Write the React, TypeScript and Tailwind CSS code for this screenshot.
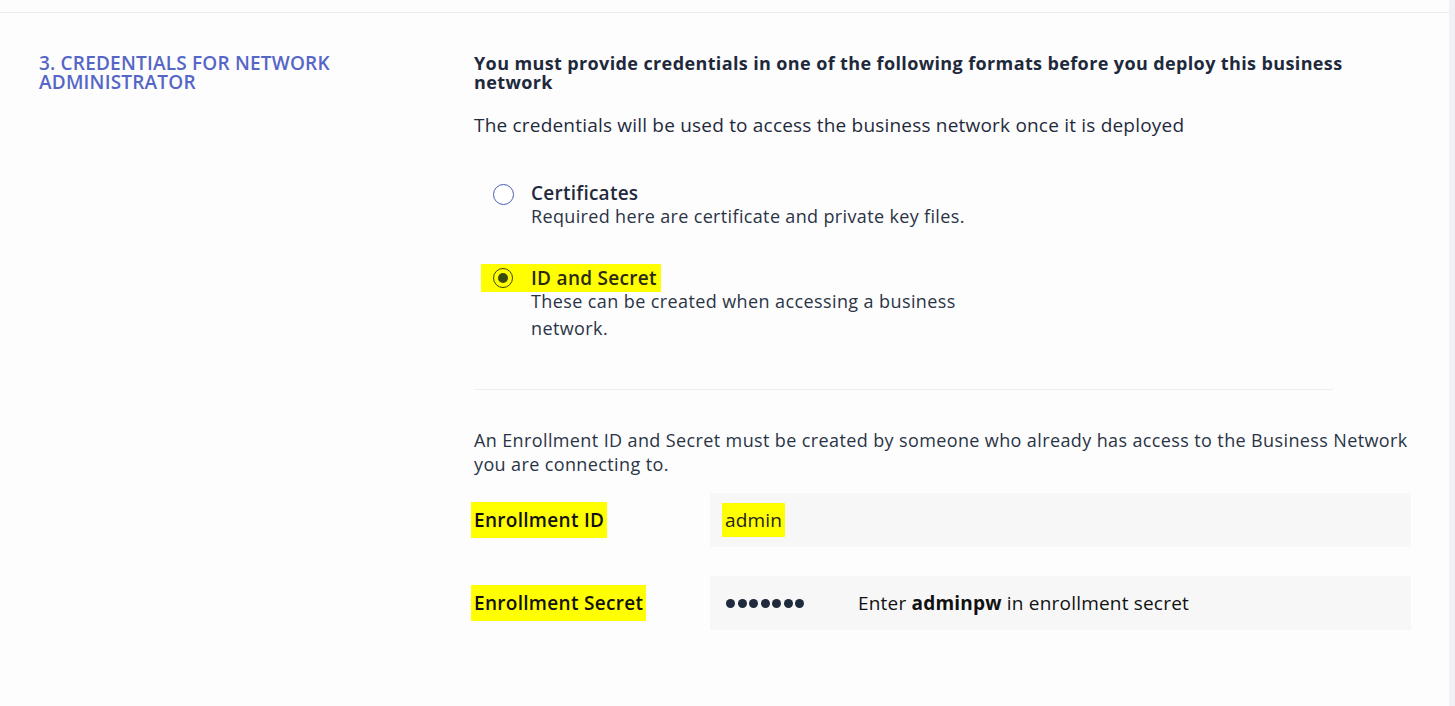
import React from 'react';

const font = { fontFamily: '"Open Sans", "Noto Sans", sans-serif' };

const Radio: React.FC<{ checked?: boolean }> = ({ checked }) =>
  checked ? (
    <span className="flex h-[20px] w-[20px] shrink-0 items-center justify-center rounded-full border border-[#3b4212]">
      <span className="block h-[10px] w-[10px] rounded-full bg-[#3b4a0e]" />
    </span>
  ) : (
    <span className="block h-[21px] w-[21px] shrink-0 rounded-full border border-[#4a5bb5] bg-white" />
  );

export default function App() {
  return (
    <div className="flex h-[706px] w-full bg-[#fdfdfd] text-[#1f2a3c]" style={font}>
      <div className="flex flex-1 flex-col">
        <div className="h-[13px] border-b border-[#ececee] bg-[#fdfdfd]" />
        <div className="flex pt-[41px] pl-[39px]">
          <div className="w-[435px] shrink-0">
            <h2 className="w-[340px] text-[19px] font-semibold uppercase leading-[19px] tracking-[0.2px] text-[#5566c6]">
              3. Credentials for network administrator
            </h2>
          </div>
          <div className="w-[937px] shrink-0">
            <h3 className="w-[900px] text-[18px] font-bold leading-[19px] tracking-[0.38px] text-[#1e293b]">
              You must provide credentials in one of the following formats before you deploy this business network
            </h3>
            <p className="mt-[21px] text-[19px] leading-[24px] tracking-[0.2px]">
              The credentials will be used to access the business network once it is deployed
            </p>

            <div className="mt-[47px] flex gap-[17px] pl-[19px]">
              <Radio />
              <div>
                <div className="text-[19px] font-semibold leading-[19px] tracking-[0.25px]">Certificates</div>
                <div className="w-[450px] text-[18px] leading-[27px] tracking-[0.35px] text-[#2a3446]">
                  Required here are certificate and private key files.
                </div>
              </div>
            </div>

            <div className="mt-[34px] pl-[7px]">
              <div className="flex w-fit items-center gap-[18px] bg-[#ffff00] py-[4px] pr-[4px] pl-[12px]">
                <Radio checked />
                <span className="text-[19px] font-semibold leading-[19px] tracking-[0.3px] text-[#2a2a10]">ID and Secret</span>
              </div>
              <div className="-mt-[4px] ml-[50px] w-[450px] text-[18px] leading-[27px] tracking-[0.4px] text-[#2a3446]">
                These can be created when accessing a business network.
              </div>
            </div>

            <div className="mt-[47px] h-px w-[859px] bg-[#eeeef0]" />

            <p className="mt-[38px] w-[937px] text-[18px] leading-[24px] tracking-[0.38px] text-[#2a3446]">
              An Enrollment ID and Secret must be created by someone who already has access to the Business Network you are connecting to.
            </p>

            <div className="mt-[17px] flex items-center">
              <div className="w-[236px] shrink-0">
                <span className="-ml-[3px] bg-[#ffff00] px-[3px] py-[5px] text-[19px] font-semibold leading-[24px] tracking-[0.3px] text-[#111]">
                  Enrollment ID
                </span>
              </div>
              <div className="flex h-[54px] w-[701px] items-center bg-[#f7f7f8] pl-[12px]">
                <span className="bg-[#ffff00] px-[3px] py-[5px] text-[19px] leading-[24px] tracking-[0.2px] text-[#222]">admin</span>
              </div>
            </div>

            <div className="mt-[29px] flex items-center">
              <div className="w-[236px] shrink-0">
                <span className="-ml-[3px] bg-[#ffff00] px-[3px] py-[5px] text-[19px] font-semibold leading-[24px] tracking-[0.3px] text-[#111]">
                  Enrollment Secret
                </span>
              </div>
              <div className="flex h-[54px] w-[701px] items-center bg-[#f7f7f8] pl-[16px]">
                <div className="flex w-[132px] gap-[2.5px]">
                  {Array.from({ length: 7 }).map((_, i) => (
                    <span key={i} className="block h-[9px] w-[9px] rounded-full bg-[#1f2a3c]" />
                  ))}
                </div>
                <span className="text-[19px] leading-[24px] tracking-[0.2px] text-[#111]">
                  Enter <b className="font-bold">adminpw</b> in enrollment secret
                </span>
              </div>
            </div>
          </div>
        </div>
      </div>
      <div className="w-[6px] shrink-0 bg-[#f0f1f6]" />
    </div>
  );
}
